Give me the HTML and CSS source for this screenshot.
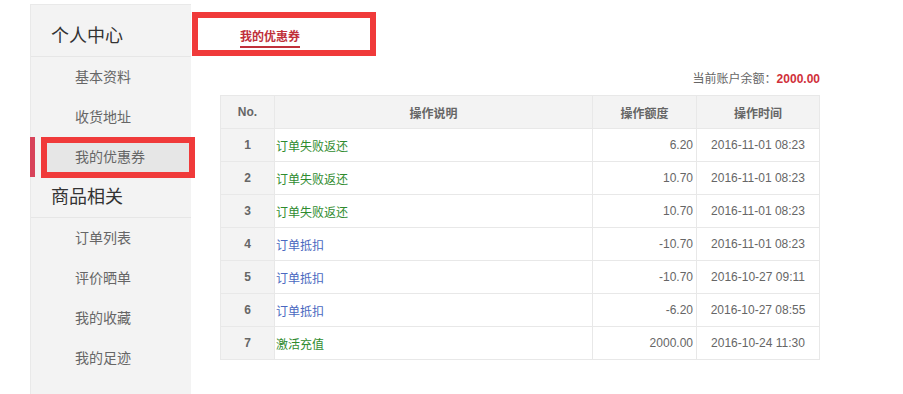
FILE: index.html
```html
<!DOCTYPE html>
<html lang="zh-CN">
<head>
    <meta charset="UTF-8">
    <title>我的优惠券</title>
    <link rel="stylesheet" href="styles.css">
</head>
<body>
    <div class="page">
        <div class="sidebar">
            <h3 class="nav-title">个人中心</h3>
            <a class="nav-item">基本资料</a>
            <a class="nav-item">收货地址</a>
            <a class="nav-item active">我的优惠券</a>
            <h3 class="nav-title">商品相关</h3>
            <a class="nav-item">订单列表</a>
            <a class="nav-item">评价晒单</a>
            <a class="nav-item">我的收藏</a>
            <a class="nav-item">我的足迹</a>
        </div>
        <div class="main">
            <div class="tabs">
                <a class="tab active">我的优惠券</a>
            </div>
            <div class="balance">当前账户余额：<span class="amount">2000.00</span></div>
            <table class="log-table">
                <thead>
                    <tr>
                        <th class="col-no">No.</th>
                        <th class="col-desc">操作说明</th>
                        <th class="col-amt">操作额度</th>
                        <th class="col-time">操作时间</th>
                    </tr>
                </thead>
                <tbody id="logBody">
                    <tr><td class="col-no">1</td><td class="desc in">订单失败返还</td><td class="amt">6.20</td><td class="time">2016-11-01 08:23</td></tr>
                    <tr><td class="col-no">2</td><td class="desc in">订单失败返还</td><td class="amt">10.70</td><td class="time">2016-11-01 08:23</td></tr>
                    <tr><td class="col-no">3</td><td class="desc in">订单失败返还</td><td class="amt">10.70</td><td class="time">2016-11-01 08:23</td></tr>
                    <tr><td class="col-no">4</td><td class="desc out">订单抵扣</td><td class="amt">-10.70</td><td class="time">2016-11-01 08:23</td></tr>
                    <tr><td class="col-no">5</td><td class="desc out">订单抵扣</td><td class="amt">-10.70</td><td class="time">2016-10-27 09:11</td></tr>
                    <tr><td class="col-no">6</td><td class="desc out">订单抵扣</td><td class="amt">-6.20</td><td class="time">2016-10-27 08:55</td></tr>
                    <tr><td class="col-no">7</td><td class="desc in">激活充值</td><td class="amt">2000.00</td><td class="time">2016-10-24 11:30</td></tr>
                </tbody>
            </table>
        </div>
        <!-- annotation boxes -->
        <div class="mark mark-nav"></div>
        <div class="mark mark-tab"></div>
    </div>
</body>
</html>
```

FILE: styles.css
```css
body {
    margin: 0;
    font-family: "Liberation Sans", "Noto Sans CJK SC", sans-serif;
    color: #666;
    background: #fff;
}
.page {
    position: relative;
    display: flex;
    align-items: flex-start;
    padding: 4px 0 0 30px;
    height: 390px;
    overflow: hidden;
}
.sidebar {
    width: 160px;
    min-height: 400px;
    background: #f3f3f3;
    border-left: 1px solid #e9e9e9;
    border-top: 1px solid #e9e9e9;
    padding-top: 11px;
    flex-shrink: 0;
}
.nav-title {
    margin: 0;
    height: 40px;
    line-height: 40px;
    padding-left: 20px;
    font-size: 18px;
    font-weight: normal;
    color: #333;
    border-bottom: 1px solid #e6e6e6;
}
.nav-item {
    display: block;
    height: 40px;
    line-height: 40px;
    padding-left: 44px;
    font-size: 14px;
    color: #666;
}
.nav-item.active {
    margin-left: -1px;
    border-left: 5px solid #d8435a;
    padding-left: 40px;
    background: linear-gradient(to right, #f3f3f3 6px, #e6e6e6 6px);
}
.main {
    width: 600px;
    padding-left: 29px;
}
.tabs {
    padding: 23px 0 0 20px;
    height: 22px;
}
.tab {
    display: inline-block;
    font-size: 12px;
    font-weight: bold;
    line-height: 16px;
    color: #c0303a;
    padding-bottom: 1px;
    border-bottom: 2px solid #c0303a;
}
.balance {
    margin-top: 22px;
    text-align: right;
    font-size: 12px;
    line-height: 16px;
    color: #666;
}
.balance .amount {
    color: #d0303a;
    font-weight: bold;
}
.log-table {
    margin-top: 8px;
    width: 600px;
    border-collapse: collapse;
    font-size: 12px;
}
.log-table th, .log-table td {
    height: 32px;
    border: 1px solid #e8e8e8;
    padding: 0;
}
.log-table th {
    background: #f3f3f3;
    color: #666;
    font-weight: bold;
}
.col-no { width: 53px; }
.col-amt { width: 103px; }
.col-time { width: 122px; }
td.col-no {
    background: #f3f3f3;
    text-align: center;
    font-weight: bold;
    color: #666;
}
.desc {
    padding-left: 1px !important;
}
.desc.in { color: #2e8b2e; }
.desc.out { color: #4a68c0; }
.amt {
    text-align: right;
    padding-right: 3px !important;
    color: #666;
}
.time {
    text-align: center;
    color: #666;
}
.mark {
    position: absolute;
    border: 6px solid #f03a3a;
    box-sizing: border-box;
}
.mark-nav {
    left: 41px;
    top: 137px;
    width: 154px;
    height: 41px;
}
.mark-tab {
    left: 192px;
    top: 12px;
    width: 184px;
    height: 44px;
}
```
